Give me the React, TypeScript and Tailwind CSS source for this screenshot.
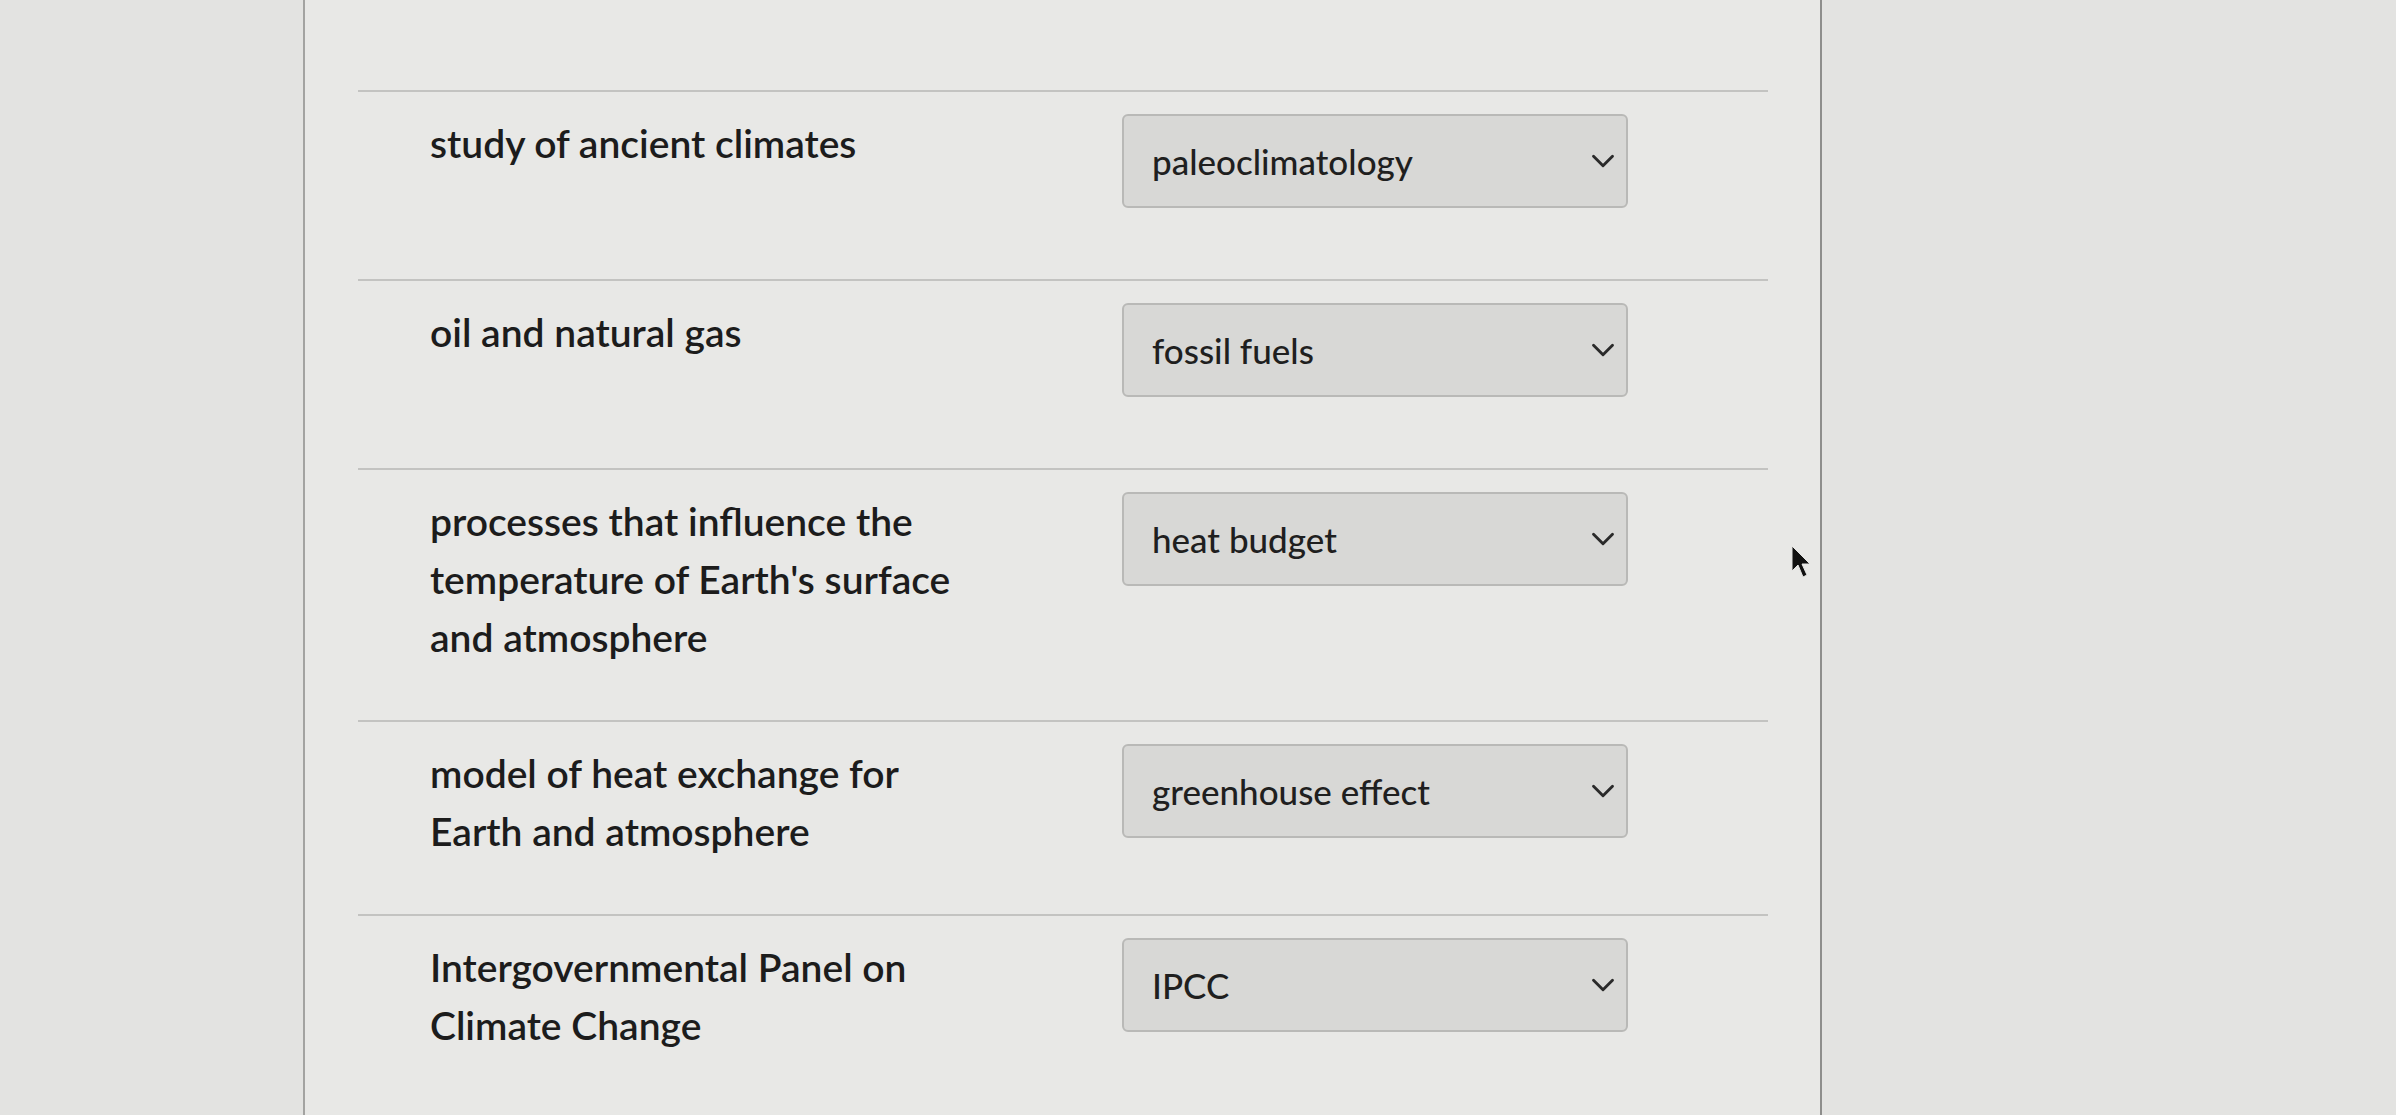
import { ChevronDown } from 'lucide-react'

type Pair = {
  prompt: string
  answer: string
}

const pairs: Pair[] = [
  { prompt: 'study of ancient climates', answer: 'paleoclimatology' },
  { prompt: 'oil and natural gas', answer: 'fossil fuels' },
  {
    prompt: "processes that influence the temperature of Earth's surface and atmosphere",
    answer: 'heat budget',
  },
  { prompt: 'model of heat exchange for Earth and atmosphere', answer: 'greenhouse effect' },
  { prompt: 'Intergovernmental Panel on Climate Change', answer: 'IPCC' },
]

function AnswerSelect({ value }: { value: string }) {
  return (
    <div className="flex h-[94px] w-[506px] shrink-0 items-center justify-between rounded-[6px] border-2 border-[#b9b9b7] bg-[#d8d8d6] pl-[28px] pr-[4px] text-[35px] font-medium text-[#1f1f1f]">
      <span>{value}</span>
      <ChevronDown className="size-[38px] text-[#2a2a2a]" strokeWidth={1.8} />
    </div>
  )
}

function MatchRow({ pair }: { pair: Pair }) {
  return (
    <div className="flex border-t-2 border-[#c3c3c1] pt-[22px] pb-[54px]">
      <div className="min-h-[111px] w-[764px] shrink-0 pl-[72px]">
        <p className="max-w-[570px] text-[39px] font-semibold leading-[58px] text-[#1c1c1c]">{pair.prompt}</p>
      </div>
      <AnswerSelect value={pair.answer} />
    </div>
  )
}

function Cursor() {
  return (
    <svg
      className="absolute left-[1791px] top-[545px]"
      width="24"
      height="36"
      viewBox="0 0 24 36"
    >
      <path d="M1 1 L1 26 L7 20 L12 32 L16 30 L11 19 L19 19 Z" fill="#111" stroke="#e5e5e3" strokeWidth="1" />
    </svg>
  )
}

export default function App() {
  return (
    <div
      className="relative h-[1115px] w-[2396px] overflow-hidden bg-[#e3e3e1]"
      style={{ fontFamily: 'Lato, "Open Sans", sans-serif' }}
    >
      <div className="ml-[303px] h-full w-[1519px] border-x-2 border-l-[#a3a3a1] border-r-[#8e8e8c] bg-[#e8e8e6] pt-[90px]">
        <div className="ml-[53px] mr-[52px]">
          {pairs.map((pair) => (
            <MatchRow key={pair.prompt} pair={pair} />
          ))}
        </div>
      </div>
      <Cursor />
    </div>
  )
}
